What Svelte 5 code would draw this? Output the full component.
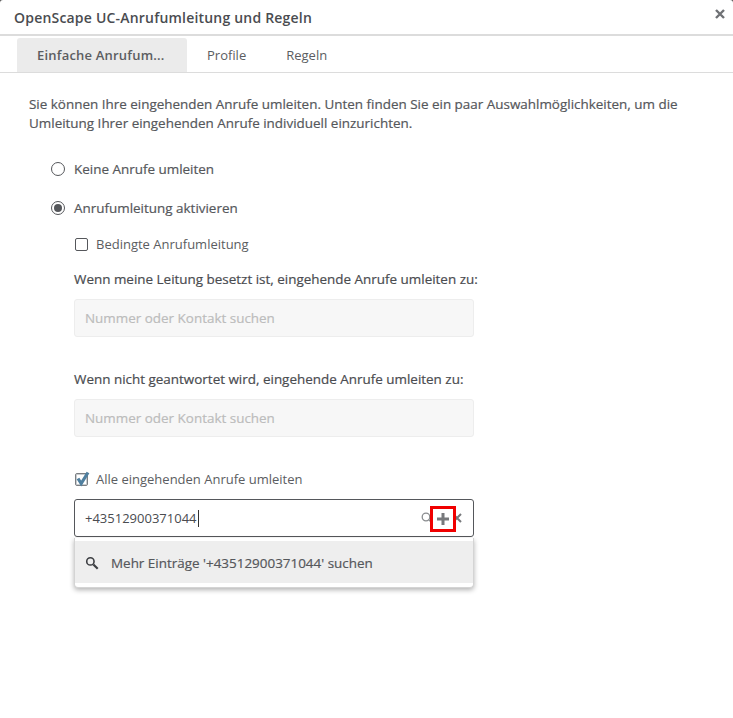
<script>
  const number = '+43512900371044';
</script>

<div class="dialog">
  <header class="head">
    <h1>OpenScape UC-Anrufumleitung und Regeln</h1>
    <svg class="close" width="10" height="10" viewBox="0 0 10 10" aria-hidden="true"><path d="M1 1l8 8M9 1l-8 8" stroke="#6f7175" stroke-width="2.4"/></svg>
  </header>

  <nav class="tabs">
    <span class="tab current">Einfache Anrufum...</span>
    <span class="tab">Profile</span>
    <span class="tab">Regeln</span>
  </nav>

  <main class="body">
    <p class="intro">Sie können Ihre eingehenden Anrufe umleiten. Unten finden Sie ein paar Auswahlmöglichkeiten, um die Umleitung Ihrer eingehenden Anrufe individuell einzurichten.</p>

    <div class="radio-row first"><span class="radio"></span><span>Keine Anrufe umleiten</span></div>
    <div class="radio-row second"><span class="radio on"></span><span>Anrufumleitung aktivieren</span></div>

    <div class="sub">
      <div class="check-row"><span class="check"></span><span>Bedingte Anrufumleitung</span></div>
      <div class="label l1">Wenn meine Leitung besetzt ist, eingehende Anrufe umleiten zu:</div>
      <div class="field disabled">Nummer oder Kontakt suchen</div>
      <div class="label l2">Wenn nicht geantwortet wird, eingehende Anrufe umleiten zu:</div>
      <div class="field disabled">Nummer oder Kontakt suchen</div>

      <div class="check-row all">
        <span class="check dim">
          <svg width="18" height="18" viewBox="0 0 18 18" aria-hidden="true"><path d="M5 8.5l3.2 5L15 2.5" fill="none" stroke="#4f7f9f" stroke-width="3.2"/></svg>
        </span>
        <span>Alle eingehenden Anrufe umleiten</span>
      </div>

      <div class="search-wrap">
        <div class="field focused">
          <span class="value">{number}</span><span class="caret"></span>
          <svg class="i-search" width="12" height="12" viewBox="0 0 12 12" aria-hidden="true"><circle cx="5" cy="5" r="3.8" fill="none" stroke="#8a8c8f" stroke-width="1.3"/><path d="M8 8l3 3" stroke="#8a8c8f" stroke-width="1.3"/></svg>
          <svg class="i-x" width="10" height="10" viewBox="0 0 10 10" aria-hidden="true"><path d="M1 1l8 8M9 1l-8 8" stroke="#77797c" stroke-width="2"/></svg>
          <span class="plus-box">
            <svg width="14" height="14" viewBox="0 0 14 14" aria-hidden="true"><path d="M7 1v12M1 7h12" stroke="#77797c" stroke-width="3"/></svg>
          </span>
        </div>
        <div class="dropdown">
          <div class="item">
            <svg width="14" height="14" viewBox="0 0 13 13" aria-hidden="true"><circle cx="5" cy="5" r="3.4" fill="none" stroke="#3c3e42" stroke-width="1.5"/><path d="M7.8 7.8l4 4" stroke="#3c3e42" stroke-width="2"/></svg>
            <span>Mehr Einträge '{number}' suchen</span>
          </div>
        </div>
      </div>
    </div>
  </main>
</div>

<style>
  :global(body) { margin: 0; background: #555; }
  .dialog {
    width: 733px; height: 718px; background: #fff; overflow: hidden; border-radius: 3px 3px 0 0;
    font-family: "Open Sans", sans-serif; color: #55575b; font-size: 13px;
  }
  .head {
    box-sizing: content-box; border-bottom: 2px solid #dcdcdc; position: relative;
    display: flex; align-items: center; padding: 2px 14px 0; height: 32px;
  }
  h1 { margin: 0; font-size: 14px; font-weight: 600; line-height: 20px; color: #4a4c50; letter-spacing: .2px; }
  .close { position: absolute; right: 8px; top: 9px; }
  .tabs {
    height: 37px; box-sizing: border-box; padding: 2px 0 0 17px;
    border-bottom: 1px solid #dcdcdc; display: flex;
  }
  .tab { padding: 0 20px; line-height: 35px; font-size: 13px; color: #5b5d61; }
  .tab.current {
    width: 170px; box-sizing: border-box; background: #ebebeb; font-weight: 600; letter-spacing: .2px;
    border-radius: 3px 3px 0 0; white-space: nowrap;
  }
  .body { padding: 22px 29px 0; }
  .intro, .radio-row, .label, .disabled, .item {
    font-size: 13.45px; font-weight: 500; -webkit-text-stroke: 0.2px;
  }
  .intro { margin: 0; line-height: 19px; width: 672px; }
  .radio-row { display: flex; align-items: center; gap: 9px; height: 20px; margin-left: 22px; }
  .radio-row.first { margin-top: 26px; }
  .radio-row.second { margin-top: 19px; }
  .radio {
    width: 14px; height: 14px; box-sizing: border-box; border: 1px solid #55575b; border-radius: 50%;
    background: #fff; display: block; flex: none; position: relative;
  }
  .radio.on::after {
    content: ""; position: absolute; left: 2px; top: 2px; width: 8px; height: 8px;
    border-radius: 50%; background: #55575b;
  }
  .sub { margin-left: 45px; width: 400px; }
  .check-row { display: flex; align-items: center; gap: 8px; height: 20px; margin-top: 16px; color: #5b5d61; }
  .check {
    width: 11px; height: 11px; border: 1px solid #55575b; border-radius: 2px; flex: none;
    background: #fff; position: relative; display: block; margin-left: 1px;
  }
  .check.dim { border-color: #7b7e82; box-shadow: inset 0 0 0 1px #c9cdd0; }
  .check svg { position: absolute; left: -3px; top: -4px; }
  .label { line-height: 20px; white-space: nowrap; color: #4a4c50; }
  .l1 { margin-top: 15px; }
  .l2 { margin-top: 32px; }
  .field {
    box-sizing: border-box; height: 38px; border-radius: 3px; padding: 0 10px;
    display: flex; align-items: center; margin-top: 10px; position: relative;
  }
  .disabled { background: #f7f7f7; border: 1px solid #ededed; color: #bcbcbc; }
  .all { margin-top: 32px; }
  .search-wrap { position: relative; }
  .search-wrap .field { margin-top: 10px; }
  .focused { border: 1px solid #55575b; color: #4a4c50; background: #fff; font-weight: 500; font-size: 13px; }
  .caret { width: 1px; height: 17px; background: #333; margin-left: 1px; }
  .i-search { position: absolute; left: 346px; top: 12px; }
  .i-x { position: absolute; left: 377px; top: 13px; }
  .plus-box {
    position: absolute; left: 355px; top: 6px; width: 26px; height: 26px; box-sizing: border-box;
    border: 3px solid #f00000; display: flex; align-items: center; justify-content: center; background: #fff;
  }
  .dropdown {
    position: absolute; left: 0; right: 0; top: 39px; height: 50px; background: #fff; box-sizing: border-box;
    padding-top: 3px; border: 1px solid #d4d4d4; border-top: 0; border-radius: 0 0 4px 4px; box-shadow: 0 2px 5px rgba(0,0,0,.3);
  }
  .item { box-sizing: border-box; height: 42px; background: #eeeeee; display: flex; align-items: center; padding: 1px 10px 0; gap: 12px; }
</style>
